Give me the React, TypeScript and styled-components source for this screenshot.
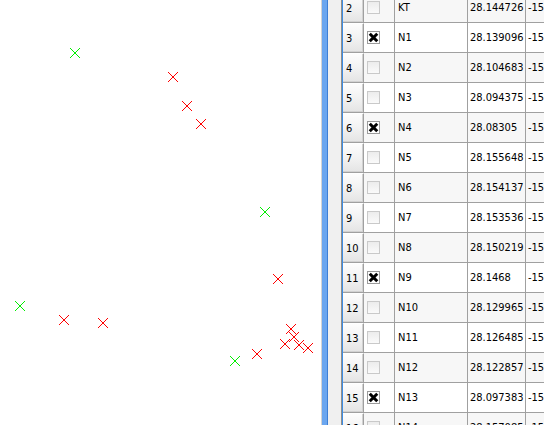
import styled, { createGlobalStyle } from "styled-components"

const GlobalStyle = createGlobalStyle`
	html, body {
		margin: 0;
		padding: 0;
		background: #ffffff;
	}
`

type Mark = { x: number; y: number; good: boolean }

const marks: Mark[] = [
	{ x: 75, y: 53, good: true },
	{ x: 265, y: 212, good: true },
	{ x: 20, y: 306, good: true },
	{ x: 235, y: 361, good: true },
	{ x: 173, y: 77, good: false },
	{ x: 187, y: 106, good: false },
	{ x: 201, y: 124, good: false },
	{ x: 278, y: 279, good: false },
	{ x: 64, y: 320, good: false },
	{ x: 103, y: 323, good: false },
	{ x: 291, y: 329, good: false },
	{ x: 294, y: 337, good: false },
	{ x: 285, y: 344, good: false },
	{ x: 299, y: 345, good: false },
	{ x: 308, y: 348, good: false },
	{ x: 257, y: 354, good: false },
]

type Point = { id: number; name: string; x: string; y: string; on: boolean }

const points: Point[] = [
	{ id: 2, name: "KT", x: "28.144726", y: "-15.402113", on: false },
	{ id: 3, name: "N1", x: "28.139096", y: "-15.401887", on: true },
	{ id: 4, name: "N2", x: "28.104683", y: "-15.399652", on: false },
	{ id: 5, name: "N3", x: "28.094375", y: "-15.398761", on: false },
	{ id: 6, name: "N4", x: "28.08305", y: "-15.397204", on: true },
	{ id: 7, name: "N5", x: "28.155648", y: "-15.412035", on: false },
	{ id: 8, name: "N6", x: "28.154137", y: "-15.412688", on: false },
	{ id: 9, name: "N7", x: "28.153536", y: "-15.413402", on: false },
	{ id: 10, name: "N8", x: "28.150219", y: "-15.414931", on: false },
	{ id: 11, name: "N9", x: "28.1468", y: "-15.417346", on: true },
	{ id: 12, name: "N10", x: "28.129965", y: "-15.418802", on: false },
	{ id: 13, name: "N11", x: "28.126485", y: "-15.419045", on: false },
	{ id: 14, name: "N12", x: "28.122857", y: "-15.419523", on: false },
	{ id: 15, name: "N13", x: "28.097383", y: "-15.420117", on: true },
	{ id: 16, name: "N14", x: "28.157085", y: "-15.421836", on: false },
]

const Cross = ({ x, y, good }: Mark) => (
	<g stroke={good ? "#00ee00" : "#ff0000"} strokeWidth={1} shapeRendering="crispEdges">
		<line x1={x - 5} y1={y - 5} x2={x + 5} y2={y + 5} />
		<line x1={x - 5} y1={y + 5} x2={x + 5} y2={y - 5} />
	</g>
)

const CheckBox = ({ on }: { on: boolean }) => (
	<Box $on={on}>
		{on && (
			<svg width="11" height="11" viewBox="0 0 11 11">
				<path d="M2.8 2.8 L8.2 8.2 M8.2 2.8 L2.8 8.2" stroke="#000" strokeWidth="3" strokeLinecap="square" />
			</svg>
		)}
	</Box>
)

export default function App() {
	return (
		<Root>
			<GlobalStyle />
			<Canvas>
				<svg width="321" height="425">
					{marks.map((m, i) => (
						<Cross key={i} {...m} />
					))}
				</svg>
			</Canvas>
			<Splitter />
			<Panel>
				<Frame>
					<Table>
						{points.map((p) => (
							<Row key={p.id} $alt={p.id % 2 === 0}>
								<HeaderCell>{p.id}</HeaderCell>
								<Cell>
									<CheckBox on={p.on} />
								</Cell>
								<Cell>{p.name}</Cell>
								<Cell $pad={2}>{p.x}</Cell>
								<Cell $pad={2}>{p.y}</Cell>
							</Row>
						))}
					</Table>
				</Frame>
			</Panel>
		</Root>
	)
}

const Root = styled.div`
	display: flex;
	flex-direction: row;
	width: 544px;
	height: 425px;
	overflow: hidden;
	background: #ffffff;
	font-family: "DejaVu Sans Condensed", "Liberation Sans", sans-serif;
	font-size: 11px;
	color: #000;
`

const Canvas = styled.div`
	flex: none;
	width: 321px;
	height: 425px;
	background: #ffffff;
	border-right: 1px solid #d4d4d4;
	svg {
		display: block;
	}
`

const Splitter = styled.div`
	flex: none;
	width: 5px;
	background: #6ba6ef;
	border-right: 1px solid #3e7fd5;
`

const Panel = styled.div`
	flex: 1;
	min-width: 0;
	display: flex;
	background: #f0f0f0;
	padding-left: 13px;
`

const Frame = styled.div`
	flex: 1;
	min-width: 0;
	overflow: hidden;
	background: #ffffff;
	border-left: 1px solid #8e8e8e;
`

const Table = styled.div`
	margin-top: -7px;
	border-left: 1px solid #3d8de4;
`

const Row = styled.div<{ $alt: boolean }>`
	display: grid;
	grid-template-columns: 21px 31px 73px 58px 200px;
	height: 30px;
	background: ${(p) => (p.$alt ? "#f7f7f7" : "#ffffff")};
`

const Cell = styled.div<{ $pad?: number }>`
	box-sizing: border-box;
	display: flex;
	align-items: center;
	padding-left: ${(p) => p.$pad ?? 3}px;
	border-right: 1px solid #a0a0a0;
	border-bottom: 1px solid #a0a0a0;
	white-space: nowrap;
	overflow: hidden;
`

const HeaderCell = styled.div`
	box-sizing: border-box;
	display: flex;
	align-items: center;
	padding-left: 3px;
	background: linear-gradient(#fdfdfd, #f2f2f2 50%, #e4e4e4);
	border-top: 1px solid #ffffff;
	border-right: 1px solid #a0a0a0;
	border-bottom: 1px solid #a0a0a0;
	box-shadow: inset -1px -1px 0 #d2d2d2;
`

const Box = styled.span<{ $on: boolean }>`
	box-sizing: border-box;
	display: flex;
	align-items: center;
	justify-content: center;
	flex: none;
	width: 13px;
	height: 13px;
	border: 1px solid ${(p) => (p.$on ? "#9a9a9a" : "#c9c9c9")};
	background: ${(p) => (p.$on ? "#ffffff" : "linear-gradient(#ececec, #fafafa)")};
`
